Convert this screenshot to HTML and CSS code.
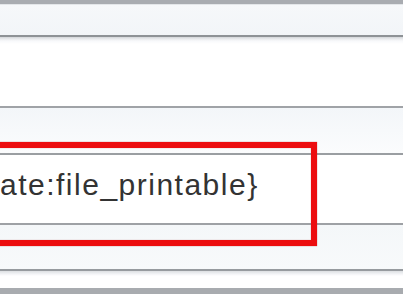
FILE: index.html
```html
<!DOCTYPE html>
<html>
<head>
<meta charset="utf-8">
<link rel="stylesheet" href="styles.css">
</head>
<body>
<div class="grid">
  <div class="row r-cap"></div>
  <div class="row r-head"></div>
  <div class="row r-blank"></div>
  <div class="row r-pale"></div>
  <div class="row r-text"><span class="cell">ate:file_printable}</span></div>
  <div class="row r-pale2"></div>
  <div class="row r-tail"></div>
  <div class="row r-foot"></div>
  <div class="highlight"></div>
</div>
</body>
</html>
```

FILE: styles.css
```css
html, body {
  margin: 0;
  padding: 0;
  background: #ffffff;
  overflow: hidden;
}

.grid {
  position: relative;
  width: 403px;
  height: 294px;
  overflow: hidden;
  display: flex;
  flex-direction: column;
  font-family: "Liberation Sans", Arial, sans-serif;
}

.row {
  flex: none;
  width: 100%;
}

.r-cap {
  height: 4px;
  background: #a9acb1;
}

.r-head {
  height: 30px;
  border-top: 1px solid #e3e6e9;
  background: linear-gradient(#f6f8fa, #f2f5f8);
  border-bottom: 2px solid #8e9296;
}

.r-blank {
  height: 69px;
  background: linear-gradient(#d2d5d8 0, #e9ebee 2px, #f8f9fb 4px, #ffffff 7px, #ffffff);
  border-bottom: 2px solid #a0a3a7;
}

.r-pale {
  height: 45px;
  background: linear-gradient(#f3f6f9, #fbfcfd);
  border-bottom: 2px solid #9a9ea2;
}

.r-text {
  height: 68px;
  background: #ffffff;
  border-bottom: 2px solid #9ea1a5;
  display: flex;
  align-items: flex-start;
}

.cell {
  margin-left: 0;
  padding-top: 13px;
  font-size: 30px;
  line-height: 34px;
  letter-spacing: 1.5px;
  color: #333333;
  white-space: nowrap;
}

.r-pale2 {
  height: 44px;
  background: linear-gradient(#f4f7f9, #f8fafb);
  border-bottom: 2px solid #979b9f;
}

.r-tail {
  height: 17px;
  background: linear-gradient(#dcdfe2 0, #f3f4f6 3px, #ffffff 5px, #ffffff);
}

.r-foot {
  height: 6px;
  background: #a8abaf;
}

.highlight {
  position: absolute;
  left: -20px;
  top: 142px;
  width: 337px;
  height: 104px;
  box-sizing: border-box;
  border: 6px solid #ec0d0f;
  box-shadow: 0 0 1px rgba(140, 0, 0, 0.6), inset 0 0 1px rgba(140, 0, 0, 0.6);
}
```
